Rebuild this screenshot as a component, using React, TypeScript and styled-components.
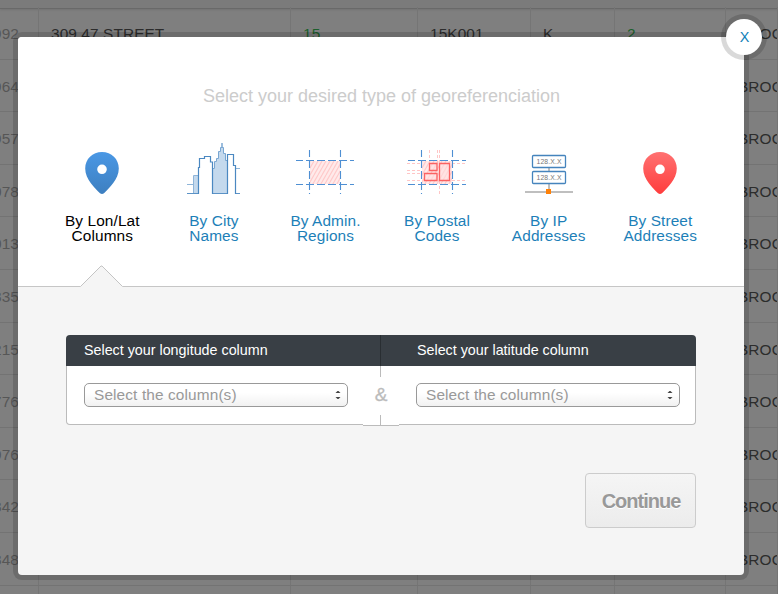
import React from "react";
import styled, { createGlobalStyle } from "styled-components";

const GlobalStyle = createGlobalStyle`
  * { box-sizing: border-box; }
  body {
    margin: 0;
    overflow: hidden;
    background: #7f7f7f;
    font-family: "Liberation Sans", Arial, Helvetica, sans-serif;
  }
`;

const Page = styled.div`
  position: relative;
  width: 778px;
  height: 594px;
  overflow: hidden;
`;

const TableHeader = styled.div`
  height: 9px;
  background: #7b7b7b;
  border-bottom: 1px solid #696969;
  box-shadow: 0 1px 2px rgba(0, 0, 0, 0.1);
`;

const Table = styled.div`
  margin-top: -2px;
`;

const Row = styled.div`
  display: grid;
  grid-template-columns: 39px 252px 127px 113px 84px 111px 52px;
  height: 52.6px;
`;

type CellKind = "id" | "text" | "number";

const Cell = styled.div<{ $kind: CellKind }>`
  overflow: hidden;
  white-space: nowrap;
  border-right: 1px solid #757575;
  border-bottom: 1px solid #737373;
  padding: ${(p) => (p.$kind === "id" ? "0 19px 0 0" : "0 0 0 12px")};
  display: flex;
  justify-content: ${(p) => (p.$kind === "id" ? "flex-end" : "flex-start")};
  font-size: 15.4px;
  letter-spacing: 0.1px;
  line-height: 53px;
  color: ${(p) =>
    p.$kind === "id" ? "#565656" : p.$kind === "number" ? "#1c5f2c" : "#2c2c2c"};
`;

const Overlay = styled.div`
  position: absolute;
  inset: 37px 34px 19px 18px;
`;

const Dialog = styled.section`
  height: 538px;
  border-radius: 4px;
  background: #f5f5f5;
  box-shadow: 0 0 0 5px rgba(0, 0, 0, 0.15);
`;

const CloseButton = styled.button`
  position: absolute;
  top: -18px;
  right: -18px;
  width: 36px;
  height: 36px;
  border: 0;
  padding: 0 0 0 1px;
  border-radius: 50%;
  background: #fff;
  box-shadow: 0 0 0 5px rgba(0, 0, 0, 0.15);
  color: #0f7fb8;
  font: 14.4px/36px "Liberation Sans", Arial, sans-serif;
`;

const Top = styled.header`
  position: relative;
  height: 250px;
  padding-top: 48px;
  border-radius: 4px 4px 0 0;
  border-bottom: 1px solid #c6c6c6;
  background: #fff;
`;

const Title = styled.h1`
  margin: 0;
  padding-left: 1px;
  font-size: 18px;
  line-height: 22px;
  font-weight: 400;
  color: #ccc;
  text-align: center;
`;

const Options = styled.nav`
  display: grid;
  grid-template-columns: repeat(6, 111.6px);
  margin: 33px 0 0 28px;
`;

const Option = styled.a<{ $active?: boolean }>`
  display: flex;
  flex-direction: column;
  align-items: center;
  gap: 18px;
  color: ${(p) => (p.$active ? "#000" : "#1d7fb8")};
`;

const Label = styled.span`
  width: 90px;
  padding-left: 1px;
  font-size: 15.4px;
  letter-spacing: 0.1px;
  line-height: 15px;
  text-align: center;
`;

const Icon = styled.svg`
  display: block;
  width: 60px;
  height: 55px;
`;

const Notch = styled.svg`
  position: absolute;
  left: 62px;
  bottom: -1px;
  display: block;
`;

const Panel = styled.div`
  margin: 48px 48px 0;
  height: 90px;
`;

const PanelHead = styled.div`
  display: grid;
  grid-template-columns: 315px 315px;
  height: 31px;
  overflow: hidden;
  border-radius: 4px 4px 0 0;
  background: #393f45;
`;

const HeadCell = styled.div<{ $second?: boolean }>`
  padding-left: ${(p) => (p.$second ? 36 : 18)}px;
  border-right: ${(p) => (p.$second ? 0 : 1)}px solid #292e32;
  color: #fff;
  font-size: 14.3px;
  line-height: 30px;
`;

const PanelBody = styled.div`
  position: relative;
  display: flex;
  justify-content: space-between;
  height: 59px;
  padding: 17px 15px 0 17px;
  border: 1px solid #bbb;
  border-top: 0;
  border-radius: 0 0 4px 4px;
  background: #fff;
`;

const Select = styled.div`
  display: flex;
  justify-content: space-between;
  align-items: center;
  width: 264px;
  height: 24px;
  padding: 0 6px 0 9px;
  border: 1px solid #999;
  border-radius: 5px;
  background: linear-gradient(#fff 40%, #f1f1f1);
  color: #999;
  font-size: 15.4px;
  letter-spacing: 0.12px;
  line-height: 22px;
`;

const Ampersand = styled.span`
  width: 20px;
  margin-right: 2px;
  line-height: 24px;
  text-align: center;
  font-size: 19px;
  -webkit-text-stroke: 0.3px #bbb;
  color: #bbb;
`;

const Joint = styled.svg`
  position: absolute;
  left: 296px;
  top: 0;
`;

const Actions = styled.div`
  display: flex;
  justify-content: flex-end;
  padding: 48px 48px 0;
`;

const Continue = styled.button`
  width: 111px;
  height: 55px;
  padding: 2px 0 0 1px;
  border: 1px solid #ccc;
  border-radius: 4px;
  background: linear-gradient(#f5f5f5, #ececec);
  color: #999;
  font: bold 20px "Liberation Sans", Arial, sans-serif;
  letter-spacing: -1px;
  text-shadow: 0 1px 0 #fff;
`;

const Pin = ({ id, from, to }: { id: string; from: string; to: string }) => (
  <Icon viewBox="0 0 60 55">
    <defs>
      <linearGradient id={id} x2="0" y2="1">
        <stop stopColor={from} />
        <stop offset="1" stopColor={to} />
      </linearGradient>
    </defs>
    <path
      fill={`url(#${id})`}
      fillRule="evenodd"
      d="M30 12C20.500 12 13.200 19 13.200 28.500C13.200 39 23 48.500 28 53.200Q30 54.800 32 53.200C37 48.500 46.800 39 46.800 28.500C46.800 19 39.500 12 30 12ZM30 24.500A4.800 4.800 0 1 1 30 34.100A4.800 4.800 0 1 1 30 24.500Z"
    />
  </Icon>
);

const City = () => (
  <Icon viewBox="-1 0 60 55">
    <path
      fill="#c4d9ed"
      d="M10 36h5v17h-5zM28.500 53V29H30.500V22H32.500V18.500H34.500V11.500H36.500V7.500H39.500V13.500H41.500V20H43.500V53z"
    />
    <path fill="none" stroke="#8fb5d9" d="M3 44.500h6.500M9.500 53V35.500H15M56 28.500H52" />
    <path
      fill="none"
      stroke="#7aa7d2"
      d="M28.500 28.500H30.500V21.500H32.500V18.500H34.500V11.500H36.500V7.500H38V3V7.500H39.500V13.500H41.500V20.500H43.500"
    />
    <path fill="none" stroke="#5b92c6" d="M3 53.500h11.500M28.500 53.500h15M51.500 53.500h4.500" />
    <path
      fill="none"
      stroke="#4b88c1"
      strokeWidth="1.2"
      d="M14.500 54V27.500H15.500V18.500H20.500V16.500H26.500V22H28.500V54M43.500 54V14.500h6V25.500h2V54"
    />
  </Icon>
);

const Grid = () => (
  <g fill="none" stroke="#4e8fd3" strokeWidth="1.100" strokeDasharray="8 3">
    <path d="M2 20.500h58M2 44.500h58" strokeDashoffset="1" />
    <path d="M15.500 10v44M46.500 10v44" strokeDashoffset="1" />
  </g>
);

const Hatch = ({ id }: { id: string }) => (
  <>
    <defs>
      <pattern id={id} width="4" height="7" patternUnits="userSpaceOnUse">
        <path stroke="#ffcaca" strokeWidth="1.2" d="M0 7L4 0M-4 7L0 0M4 7L8 0" />
      </pattern>
    </defs>
    <rect x="16" y="21" width="30" height="23" fill="#ffeaea" />
    <rect x="16" y="21" width="30" height="23" fill={`url(#${id})`} />
  </>
);

const Regions = () => (
  <Icon viewBox="1 0 60 55">
    <Hatch id="hatchRegions" />
    <Grid />
  </Icon>
);

const Postal = () => (
  <Icon viewBox="1 0 60 55">
    <Hatch id="hatchPostal" />
    <path
      fill="none"
      stroke="#ffc6c6"
      strokeDasharray="3 2"
      d="M1 23.500h15M1 30.500h15M1 33.500h15M1 40.500h15M46 23.500h14M46 40.500h14M23.500 10v13M31.500 10v13M33.500 10v13M33.500 41v13"
    />
    <Grid />
    <path
      fill="#ffdede"
      fillOpacity="0.6"
      stroke="#fb6262"
      strokeWidth="1.300"
      d="M23.500 23.500h7.500v7h-7.500zM18.500 33.500h12.500v7h-12.500zM33.500 23.500h10v17h-10z"
    />
  </Icon>
);

const Ip = () => (
  <Icon viewBox="-1 0 60 55">
    <path stroke="#aaa" strokeWidth="1.500" d="M6 52h48M30 27v4M30 43v8" />
    <g fill="#fff" stroke="#4584bd" strokeWidth="1.300">
      <rect x="13.500" y="15.500" width="33" height="12" rx="1" />
      <rect x="13.500" y="31.500" width="33" height="12" rx="1" />
    </g>
    <g fill="#777" fontFamily="Liberation Sans" fontSize="6.800">
      <text x="17.500" y="24" textLength="25">128.X.X</text>
      <text x="17.500" y="40" textLength="25">128.X.X</text>
    </g>
    <rect x="27" y="49" width="5" height="5" fill="#ff8108" />
  </Icon>
);

const ids = ["992", "964", "957", "078", "013", "835", "215", "776", "976", "842", "848", ""];

const options = [
  { lines: ["By Lon/Lat", "Columns"], icon: <Pin id="bluePin" from="#4a98e5" to="#3d7fc0" />, active: true },
  { lines: ["By City", "Names"], icon: <City /> },
  { lines: ["By Admin.", "Regions"], icon: <Regions /> },
  { lines: ["By Postal", "Codes"], icon: <Postal /> },
  { lines: ["By IP", "Addresses"], icon: <Ip /> },
  { lines: ["By Street", "Addresses"], icon: <Pin id="redPin" from="#ff7171" to="#ff3d3d" /> },
];

const ColumnSelect = () => (
  <Select>
    <span>Select the column(s)</span>
    <svg width="6" height="10" viewBox="0 0 6 10">
      <path fill="#444" d="M0.500 3L2.500 1h1L5.500 3zM0.500 7L2.500 9h1L5.500 7z" />
    </svg>
  </Select>
);

export default function App() {
  return (
    <Page>
      <GlobalStyle />
      <TableHeader />
      <Table>
        {ids.map((id, i) => (
          <Row key={i}>
            <Cell $kind="id">{id}</Cell>
            <Cell $kind="text">{i === 0 && "309 47 STREET"}</Cell>
            <Cell $kind="number">{i === 0 && "15"}</Cell>
            <Cell $kind="text">{i === 0 && "15K001"}</Cell>
            <Cell $kind="text">{i === 0 && "K"}</Cell>
            <Cell $kind="number">{i === 0 && "2"}</Cell>
            <Cell $kind="text">{id && "BROOKLYN"}</Cell>
          </Row>
        ))}
      </Table>
      <Overlay>
        <Dialog>
          <Top>
            <Title>Select your desired type of georeferenciation</Title>
            <Options>
              {options.map((o) => (
                <Option key={o.lines.join()} $active={o.active}>
                  {o.icon}
                  <Label>
                    {o.lines[0]}
                    <br />
                    {o.lines[1]}
                  </Label>
                </Option>
              ))}
            </Options>
            <Notch width="43" height="22" viewBox="0 0 43 22">
              <path fill="#f5f5f5" d="M0 22L21.500 0.500L43 22z" />
              <path fill="none" stroke="#c4c4c4" d="M0.500 21.500L21 1h1L42.500 21.500" />
            </Notch>
          </Top>
          <Panel>
            <PanelHead>
              <HeadCell>Select your longitude column</HeadCell>
              <HeadCell $second>Select your latitude column</HeadCell>
            </PanelHead>
            <PanelBody>
              <ColumnSelect />
              <Ampersand>&amp;</Ampersand>
              <ColumnSelect />
              <Joint width="36" height="60" viewBox="0 0 36 60">
                <path fill="#fff" d="M0 57h36v2H0z" />
                <path fill="none" stroke="#bbb" d="M17.500 0v11M17.500 49v10M0 59.500h36" />
              </Joint>
            </PanelBody>
          </Panel>
          <Actions>
            <Continue>Continue</Continue>
          </Actions>
        </Dialog>
        <CloseButton>X</CloseButton>
      </Overlay>
    </Page>
  );
}
